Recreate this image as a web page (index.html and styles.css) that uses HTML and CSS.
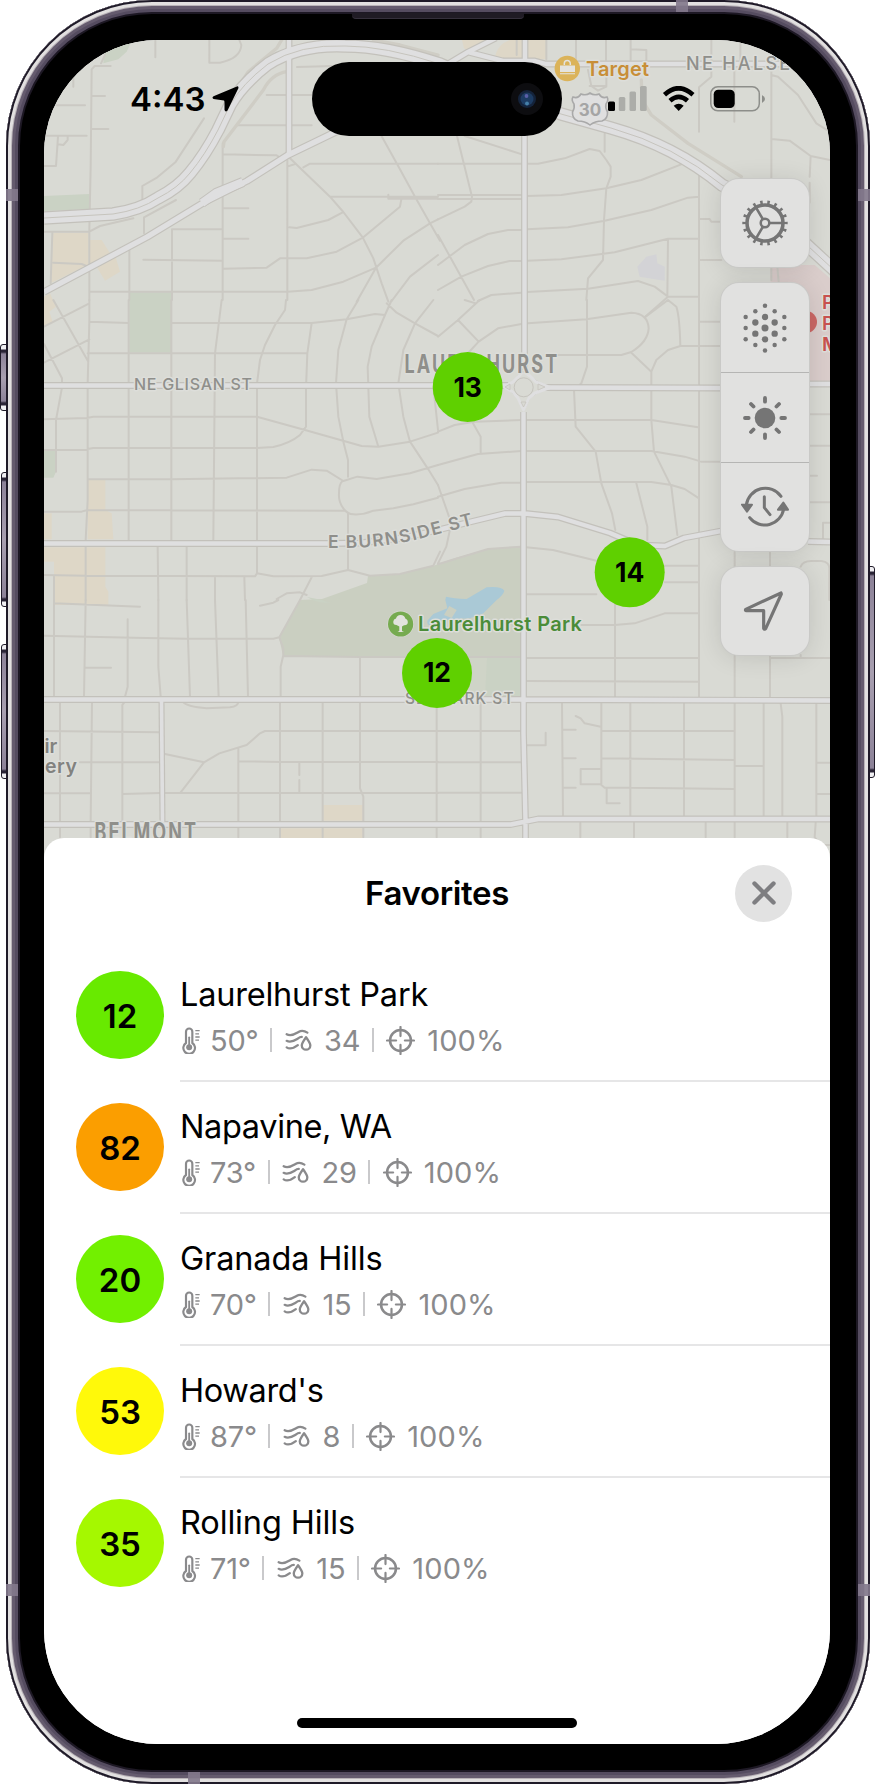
FILE: index.html
```html
<!DOCTYPE html>
<html lang="en">
<head>
<meta charset="utf-8">
<title>Favorites</title>
<link rel="stylesheet" href="styles.css">
</head>
<body>
<svg class="defs" width="0" height="0" aria-hidden="true">
  <defs>
    <symbol id="thermo" viewBox="0 0 54 84">
      <path d="M12 51V17a9.500 9.500 0 0 1 19 0V51a17.500 17.500 0 1 1-19 0Z" fill="none" stroke="currentColor" stroke-width="6.500"/>
      <circle cx="21.500" cy="64" r="9" fill="currentColor"/>
      <path d="M21.500 34V60" stroke="currentColor" stroke-width="5.500" stroke-linecap="round"/>
      <path d="M40 14H53M40 23.500H51M40 33H53M40 42.500H51" stroke="currentColor" stroke-width="4"/>
    </symbol>
    <symbol id="humid" viewBox="0 0 80 70">
      <g fill="none" stroke="currentColor" stroke-width="7" stroke-linecap="round" stroke-linejoin="round">
        <path d="M4 16C18 24 30 15 40 9S58 5 67 11"/>
        <path d="M4 36C18 43 30 34 38 29Q44 24 50 24"/>
        <path d="M4 56C14 63 26 58 38 49"/>
        <path d="M63 25Q50 43 50 50A13 13 0 0 0 76 50Q76 43 63 25Z"/>
      </g>
    </symbol>
    <symbol id="scope" viewBox="0 0 86 86">
      <circle cx="43" cy="43" r="31" fill="none" stroke="currentColor" stroke-width="7.500"/>
      <path d="M43 3V30M43 56V83M3 43H30M56 43H83" stroke="currentColor" stroke-width="6.500" stroke-linecap="round"/>
    </symbol>
  </defs>
</svg>

<div class="device">
  <i class="key key-action"></i><i class="key key-up"></i><i class="key key-down"></i><i class="key key-side"></i>
  <div class="shell">
    <i class="speaker"></i>
    <i class="band band-tl"></i><i class="band band-tr"></i><i class="band band-bl"></i><i class="band band-br"></i>
    <i class="band band-top"></i><i class="band band-bottom"></i>
    <main class="screen">
      <section class="map-area">
        <svg class="map" viewBox="44 40 786 830" width="786" height="830">
          <g class="areas">
            <g transform="scale(.33333)">
              <path class="green" d="M310 190L320 100H405L380 155L355 178ZM132 588L268 582V628L132 633ZM388 875H516V1058H388Z"/>
              <path class="sand" d="M160 698H266V793L152 850ZM268 720H305L330 760L345 765L360 815L315 842L290 800L268 795ZM132 890L150 880L168 920L148 935L158 965L132 980Z"/>
            </g>
            <g transform="translate(438 0) scale(.33333)">
              <path class="sand" d="M72 120H325V178H170Q175 135 215 120H170L105 160L78 145Z"/>
              <path class="violet" d="M598 800L625 770L655 763L658 790L680 800V842L605 830Z"/>
              <path class="rose" d="M998 795H1130L1176 835V1145H998Z"/>
            </g>
            <g transform="translate(0 300) scale(.33333)">
              <path class="sand" d="M263 540H316V630L335 640L340 718H263ZM132 640H155V718H132ZM132 742H316V860L325 875V915H162V785H132Z"/>
              <path class="green" d="M132 452H168V515L160 533H132Z"/>
            </g>
            <g transform="translate(0 600) scale(.33333)">
              <path class="sand" d="M970 615H1088V662H970ZM842 685H1088V715H842Z"/>
            </g>
            <path class="park" d="M279 637L300 600L322 599L367 583L368 576L400 574L433 566L455 558L488 549L521 547V657L283 656Z"/>
            <path class="park-soft" d="M437 657H521V698H437Z"/>
            <path class="green" d="M487 657H521V697H485Z"/>
            <path class="green" d="M307 597L322 600Q330 605 340 598Q325 608 307 597Z"/>
            <g transform="translate(370 530) scale(.33333)">
              <path class="lake" d="M228 200Q250 205 290 207L350 172Q395 168 403 182Q400 195 380 210L340 250L300 265L240 268L185 285Q170 288 172 272L190 252L232 235L226 210Z"/>
              <path class="isle" d="M222 255L238 228L260 240L245 264Z"/>
            </g>
          </g>

          <g class="streets">
            <g transform="scale(.33333)">
              <path d="M466 120V172M628 120V188H660Q722 175 724 135L718 120M332 198H284L275 208L272 500L268 690V900M275 288H315M170 316H255M275 387H325M220 230V260M140 407H260M174 410L168 498H132M174 433L190 435L203 420V410M303 190L315 165M612 355L526 487L472 532L427 558V600M891 201L1000 198M800 285H935M710 376H935M670 463L830 466L850 480M668 430V900M1140 400L1190 490L1245 590L1290 670L1320 722M910 502L930 491H1314M862 500L885 492M862 480V900M870 475L990 590L1030 636L1088 712L1120 775L1145 850L1165 905M990 590H1314M1165 584V596H1314M868 682L890 684L985 660L1028 637M670 806L800 803L840 775H920L1010 755L1090 712L1200 620L1204 598M670 625H745M670 716H745M516 688H668M516 688V900M430 779L668 782M388 745V900M268 875H862L935 870L1030 845L1128 803L1210 722L1290 670L1314 658M1128 803L1070 905M1175 903L1230 830L1314 765M132 695H268L300 678L400 655M528 600L432 652V700M157 700L152 850M160 788L245 792L265 800"/>
              <path class="ramp" d="M670 440L672 425L790 270Q815 222 860 215M705 275L745 215L830 145L845 120M1120 120L1200 135L1314 165"/>
            </g>
            <g transform="translate(438 0) scale(.33333)">
              <path d="M325 120V178M236 120V165M414 120V180M504 120V180M578 120V180M578 148L625 150V180M820 120V230L783 262V395M907 120V180M889 200V365M1000 190V540M450 210L460 258L480 272L505 260V210M455 258H505M1000 225L1020 230L1080 285L1135 370L1170 392M1000 417L1055 422L1118 468L1176 480M1118 468L1115 530M0 491H300L380 475L455 447L485 453L505 480L518 500V530L505 565L498 660L495 780L450 835L445 900M500 400V455M80 408L252 463M55 400L102 590L100 605L80 620L0 658M0 585H252M0 597H252M267 588L370 585L505 565L610 540L745 487M267 688L390 682L500 662L640 630L750 593L783 590M380 355L710 460L750 487L783 518V900M0 795L80 735L150 702L210 690H252M0 705L108 900M0 870L70 830L150 798L215 783H252M267 782L370 778L530 757L690 716H783M690 716L688 890H783M783 780H850M783 657H815L820 665H850M267 876L450 866L600 843L650 860L690 890L620 952M120 903L160 885L250 878M1115 548V608M1000 800V840M1018 800L1022 845"/>
              <path class="ramp" d="M610 240L612 300L640 345L750 430L910 530"/>
            </g>
            <g transform="translate(0 300) scale(.33333)">
              <path d="M132 80L268 10M132 188L268 118M160 0L265 185M132 132L186 235V250M186 262L168 360V515M268 0V65L263 250V600L257 720M268 65L386 69M386 0V720M514 0V720M665 0L645 160L640 720M858 0L855 30L825 75L795 135L780 180L771 250V820M516 69H935L1040 58L1125 42L1155 45L1175 0M263 160H920M935 69L922 160L918 265V380L900 405Q870 430 820 441L770 444H280L245 450H132M132 358L260 354L280 350H771L915 390L1085 438L1135 440L1230 425L1314 398M1075 0L1040 58L1015 150L1008 250L1015 350L1030 425L1044 480V530M1155 45L1115 140L1103 200L1108 350L1135 440M1300 0L1245 70L1210 150L1195 250L1210 350L1230 425L1283 505L1314 555M1160 10L1190 38L1245 70L1314 108M263 537L515 538L860 533L935 509L980 512L1030 543L1072 530L1130 537L1230 520L1314 495M1028 543Q1017 550 1017 580Q1015 605 1030 625Q1042 642 1060 643Q1090 645 1120 632L1180 625L1240 613L1314 593M132 635H245L262 630L1035 632M1044 640V810M132 825L257 827L765 829L771 820L820 829L965 828L1044 810L1110 827L1200 822L1300 797L1320 755M257 740V900M473 740L475 900M560 740V900M645 829V900M733 832L735 900M162 827V900M935 832L900 900M830 897L860 880L900 877L920 885"/>
            </g>
            <g transform="translate(438 300) scale(.33333)">
              <path d="M113 10L80 0M0 110L60 60L125 0M60 60L122 125M85 165L122 125L180 85L250 72M270 70L445 58L580 38Q630 40 632 85Q630 125 580 156L550 165H355M580 158L640 215V360L648 455L700 560L718 705M447 0V200L430 250L408 270L413 380L473 455L490 550L522 640L532 690M620 52L690 0L715 20Q725 50 727 138M640 215L655 180L690 150L727 138H783M783 65H850M783 138H850M783 0V900M0 395L50 375L110 365L250 360M265 360H640L780 382M105 370L128 410V458M0 495L120 462L250 453M265 453H640L740 470L790 485H850M0 590L80 567L190 548H250M265 546H640L700 555L740 567L783 595M595 550L628 680V720M0 555L40 670L25 740L0 790M0 793L150 747L250 740L345 750L445 775L475 782M680 797H780M680 847H780M265 883H475M890 755V800M996 755V800M1115 343H1176M1115 437H1176M1115 527H1137M1115 607H1176M1155 715V668H1176M1088 800Q1095 783 1120 783H1150Q1176 785 1174 810V900M0 210L-15 250L0 390"/>
            </g>
            <g transform="translate(0 600) scale(.33333)">
              <path d="M132 107L400 113L560 116H820L838 112L900 0M838 112L850 145V165L842 200V290M850 168L1080 171H1560M1080 172V290M162 0V290M257 0L252 290M162 10L420 20M383 58V260L375 290M475 0V200L482 290M560 0L570 290M645 0L656 290M737 0L744 290M780 17L820 8L835 0M257 203H333M180 305V712M276 305L272 665V712M375 305L367 315V665M548 305Q560 320 620 325L690 322Q715 318 715 305M132 393L480 397M240 487H480M132 580H272M367 582L480 579H1314M840 305V712M968 305V712M1080 305V565L1090 590V712M1310 320V712M542 577L612 487L658 460L740 435L780 400L795 393H1314M495 462L612 487M715 445V712M715 484L840 486H1314M898 490V525M898 540V575"/>
            </g>
            <g transform="translate(438 600) scale(.33333)">
              <path d="M430 75H530L590 70L680 40H783M531 0V295M783 0V295M267 174H783M267 243L783 245M890 165V300M996 165V300M996 174H1176M1088 165V174M128 310V712M0 393H250M0 487H250M0 578H250M372 310L375 648M375 389H413M375 475H413M375 563H413M323 398V436H267M413 348L428 355L440 370L488 380M490 310V555L500 563H580L888 567M428 507H490M428 507V553H490M506 565V610H545M577 310V648M738 310V648M890 310V712M977 310V648M1028 310L1033 350V648M1135 310V648M490 393H888M490 475L888 480M890 498H977M1135 488H1176M1135 582H1176M427 668V712M588 668V712M803 668V712M1048 668V712M1133 668L1130 712L1150 735H1176"/>
            </g>
          </g>

          <defs>
            <path id="main-roads" d="M289 40V155M525 40V60M524.500 130V372M523.500 412V733L525.500 821V850M448 64L468 52L496 38M468 52L503 61H535L546 64H830M44 385.500H508M539 387.500L722 388M808 384H830M44 543.500H330L360 543L402 538L438 530L472 521.500L505 513.500H525L558 517L610 533L638 545L665 546L684 538L721 531M808 541.500L830 542M44 699.500H524L830 700.500M44 824.500H511L538 819H830"/>
            <path id="thin-roads" d="M161.500 700L162.500 822"/>
            <path id="sandy" d="M44 292L147 237L203 203L247 181L288 155L350 125"/>
            <path id="wide" d="M202 203L216 193L243 182"/>
            <path id="freeway" d="M44 218L113 214Q140 210 158 198Q178 188 190 173Q205 155 218 130L230 105Q242 84 268 64Q300 44 345 46Q385 46 440 64L500 90L561 114L611 128Q675 146 722 185L767 208L808 246L835 271"/>
          </defs>
          <use href="#sandy" class="case" stroke-width="7.500"/>
          <use href="#wide" class="case" stroke-width="10"/>
          <use href="#main-roads" class="case" stroke-width="6.800"/>
          <use href="#thin-roads" class="case" stroke-width="6"/>
          <use href="#freeway" class="case" stroke-width="13.500"/>
          <use href="#sandy" class="road" stroke-width="5.300"/>
          <use href="#wide" class="road" stroke-width="8"/>
          <use href="#main-roads" class="road" stroke-width="4.400"/>
          <use href="#thin-roads" class="road" stroke-width="3.600"/>
          <use href="#freeway" class="road" stroke-width="11"/>
          <use href="#freeway" class="median" stroke-width="1"/>
          <path class="case" stroke-width="1" d="M503 387L510 384L518 376L521 371M503 387L510 391L518 398L523.500 411L530 398L540 391L551 387L540 383L531 377L526 371"/>
          <path class="road" stroke-width="3" d="M504 387L513 382L519 376L523 371L530 376L536 382L550 387.500L535 393L529 398L523.500 410L518 398L513 392Z"/>
          <circle class="isle-ring" cx="523.700" cy="387.300" r="9.500"/>
          <path class="wedge" d="M505 387L510 384V390ZM538 384V390L545 387ZM521 402H526L523.500 407ZM521 372H526L523.500 368Z"/>

          <g class="labels">
            <text x="134" y="390" font-size="16" textLength="118">NE GLISAN ST</text>
            <text x="405" y="703.800" font-size="15.500" textLength="108.500">SE STARK ST</text>
            <text x="686" y="70" font-size="18" textLength="119">NE HALSEY</text>
            <path id="burnside" d="M328 548H345Q380 548 415 540L490 520.500" fill="none"/>
            <text font-size="17.500" class="semi"><textPath href="#burnside" textLength="148">E BURNSIDE ST</textPath></text>
            <text class="district" transform="translate(404.500 372.700) scale(.72 1)" textLength="212">LAURELHURST</text>
            <text class="district" transform="translate(94.500 841) scale(.72 1)" textLength="141">BELMONT</text>
            <text x="44.500" y="753" class="place">ir</text>
            <text x="45" y="773.300" class="place" textLength="32">ery</text>
            <g class="hospital"><text x="822" y="309">P</text><text x="822" y="330">P</text><text x="822" y="351">M</text></g>
            <circle cx="806" cy="322" r="11" fill="#cb6765"/>
            <text x="586" y="76" class="shop" textLength="63">Target</text>
            <text x="418" y="631.400" class="park-name" textLength="164">Laurelhurst Park</text>
          </g>
          <circle cx="567.300" cy="68.500" r="12.700" fill="#dbb35a"/>
          <path d="M560 65.500H575V72H560ZM560 73.300H575V74.300H560Z" fill="#e4e3df"/>
          <path d="M564.300 65V63.500A3 3 0 0 1 570.300 63.500V65" fill="none" stroke="#e4e3df" stroke-width="1.500"/>
          <circle cx="400.600" cy="624" r="13.200" fill="#d9dad4"/>
          <circle cx="400.600" cy="624" r="12.600" fill="#76ab50"/>
          <path d="M399.300 631V626.500L396.500 625Q393 625 393.300 621.500Q393.500 619 396 618.500Q397 614.800 400.800 615Q404.500 615 405.300 618.500Q408 619.500 407.800 622.500Q407.500 625.500 404 625.200L402 626.500V631L404 632H397.500Z" fill="#e2e3de"/>
          <path d="M573 97Q578 99 581 94Q586 96 590 93Q594 96 599 94Q602 99 607 97Q609 100 606 104Q605 108 607.500 112Q608 119 602 121Q595 121 590 125Q585 121 578 121Q572 119 572.500 112Q575 108 574 104Q571 100 573 97Z" fill="#dfdfdf" stroke="#a9a9a9" stroke-width="1.600"/>
          <text x="590" y="116" class="shield">30</text>

          <g class="pins">
            <circle cx="467.700" cy="387" r="35"/><text x="467.700" y="396.500">13</text>
            <circle cx="629.700" cy="572.300" r="35"/><text x="629.700" y="581.500">14</text>
            <circle cx="437" cy="673" r="35"/><text x="437" y="682.300">12</text>
          </g>
        </svg>

        <header class="status">
          <div class="clock">4:43
            <svg width="27" height="26" viewBox="0 0 27 26"><path d="M25.500.300L1.500 10.200Q-.5 11.500 1.500 13L12 14.500Q12.500 15 12.500 16V24Q13.500 26.500 15.500 24.500L26.500 2Q26.500 0 25.500.300Z"/></svg>
          </div>
          <div class="island">
            <svg width="32" height="32" viewBox="0 0 32 32">
              <circle cx="16" cy="16" r="16" fill="#0d0d10"/><circle cx="16" cy="16" r="9" fill="#14233b"/>
              <circle cx="16" cy="16" r="6.500" fill="#1d3c63"/><circle cx="15.500" cy="13" r="1.900" fill="#5a5fa8"/><circle cx="16" cy="20.500" r="1.900" fill="#457fa8"/>
            </svg>
          </div>
          <div class="indicators">
            <svg width="40" height="26" viewBox="0 0 40 26"><rect x="0" y="15.500" width="7" height="9.500" rx="1.500"/><g fill="#acada9"><rect x="10.800" y="11" width="6.500" height="14" rx="1.500"/><rect x="21.500" y="5.500" width="6.500" height="19.500" rx="1.500"/><rect x="32" y="0" width="6.700" height="25" rx="1.500"/></g></svg>
            <svg width="34" height="26" viewBox="0 0 34 26"><path d="M2.500 8.700Q16.500-4.200 31 8.700M8 14.800Q16.700 7 25.500 14.800" fill="none" stroke="#000" stroke-width="4.600"/><path d="M11.700 19.800Q16.700 15.800 21.700 19.800L16.700 25Z"/></svg>
            <svg width="55" height="26" viewBox="0 0 55 26"><rect x=".8" y=".8" width="48.500" height="24" rx="7" fill="none" stroke="#8d8e8a" stroke-width="1.500"/><rect x="3.700" y="3.700" width="21" height="18.300" rx="4.500"/><path d="M52 9.200Q55 10.500 55 13T52 16.800Z" fill="#8d8e8a"/></svg>
          </div>
        </header>

        <nav class="controls">
          <div class="panel"><button class="ctl" aria-label="Settings">
            <svg width="52" height="52" viewBox="-26 -26 52 52" fill="none" stroke="currentColor">
              <circle r="18" stroke-width="3.600"/><circle r="20.800" pathLength="360" stroke-width="3.800" stroke-dasharray="7 13" stroke-dashoffset="3.500"/>
              <circle r="4.300" stroke-width="2.500"/><path d="M5 0H17M-2.500 4.300L-8.500 14.700M-2.500-4.300L-8.500-14.700" stroke-width="2.600"/>
            </svg></button></div>
          <div class="panel">
            <button class="ctl" aria-label="Particles"><svg width="52" height="52" viewBox="-78 -78 156 156" fill="currentColor">
              <circle r="10.500"/><circle cy="-33" r="9.500"/><circle cy="34" r="9.500"/><circle cx="-29" cy="-16.500" r="9.500"/><circle cx="29" cy="-16.500" r="9.500"/><circle cx="-29" cy="17" r="9.500"/><circle cx="29" cy="17" r="9.500"/>
              <circle cy="-67" r="6.700"/><circle cy="67.500" r="6.700"/><circle cx="-29" cy="-50" r="6.700"/><circle cx="29" cy="-50" r="6.700"/><circle cx="-58" cy="-33" r="6.700"/><circle cx="58" cy="-33" r="6.700"/><circle cx="-58" r="6.700"/><circle cx="58" r="6.700"/><circle cx="-58" cy="34" r="6.700"/><circle cx="58" cy="34" r="6.700"/><circle cx="-29" cy="51" r="6.700"/><circle cx="29" cy="51" r="6.700"/>
            </svg></button>
            <button class="ctl" aria-label="Brightness"><svg width="52" height="52" viewBox="-78 -78 156 156">
              <circle r="31" fill="currentColor"/><path d="M0-49V-60M0 49V60M-49 0H-60M49 0H60M34.500-34.500L42-42M-34.500-34.500L-42-42M34.500 34.500L42 42M-34.500 34.500L-42 42" stroke="currentColor" stroke-width="11.500" stroke-linecap="round"/>
            </svg></button>
            <button class="ctl" aria-label="History"><svg width="52" height="52" viewBox="-78 -78 156 156" fill="none" stroke="currentColor" stroke-width="9" stroke-linecap="round" stroke-linejoin="round">
              <path d="M48-32A57.500 57.500 0 0 0-56-6M-46 32A57.500 57.500 0 0 0 56 6M-2-31V2L15 23"/>
              <path d="M-69-7H-39L-54 14ZM39 8H69L55-13Z" fill="currentColor" stroke-width="6"/>
            </svg></button>
          </div>
          <div class="panel"><button class="ctl" aria-label="Locate"><svg width="52" height="52" viewBox="-78 -78 156 156" fill="none" stroke="currentColor" stroke-width="9.500" stroke-linejoin="round">
            <path d="M48-54L-58-5Q-60-1-56-1L-4-1V52Q-1 57 2 53L49-51Z"/></svg></button></div>
        </nav>
      </section>

      <section class="sheet">
        <div class="sheet-head">
          <h1>Favorites</h1>
          <button class="close" aria-label="Close"><svg width="24" height="24" viewBox="0 0 24 24"><path d="M2.500 2.500L21.500 21.500M21.500 2.500L2.500 21.500" stroke="#7e7e81" stroke-width="4.400" stroke-linecap="round"/></svg></button>
        </div>
        <ul class="list">
          <li class="item"><span class="aqi aqi-12">12</span><div class="info"><h2>Laurelhurst Park</h2><p class="stats"><svg class="i-thermo"><use href="#thermo"/></svg><span>50°</span><i></i><svg class="i-humid"><use href="#humid"/></svg><span>34</span><i></i><svg class="i-scope"><use href="#scope"/></svg><span class="pct">100%</span></p></div></li>
          <li class="item"><span class="aqi aqi-82">82</span><div class="info"><h2 class="snug">Napavine, WA</h2><p class="stats"><svg class="i-thermo"><use href="#thermo"/></svg><span>73°</span><i></i><svg class="i-humid"><use href="#humid"/></svg><span>29</span><i></i><svg class="i-scope"><use href="#scope"/></svg><span class="pct">100%</span></p></div></li>
          <li class="item"><span class="aqi aqi-20">20</span><div class="info"><h2 class="loose">Granada Hills</h2><p class="stats"><svg class="i-thermo"><use href="#thermo"/></svg><span>70°</span><i></i><svg class="i-humid"><use href="#humid"/></svg><span>15</span><i></i><svg class="i-scope"><use href="#scope"/></svg><span class="pct">100%</span></p></div></li>
          <li class="item"><span class="aqi aqi-53">53</span><div class="info"><h2 class="snug">Howard's</h2><p class="stats"><svg class="i-thermo"><use href="#thermo"/></svg><span>87°</span><i></i><svg class="i-humid"><use href="#humid"/></svg><span>8</span><i></i><svg class="i-scope"><use href="#scope"/></svg><span class="pct">100%</span></p></div></li>
          <li class="item"><span class="aqi aqi-35">35</span><div class="info"><h2 class="loose">Rolling Hills</h2><p class="stats"><svg class="i-thermo"><use href="#thermo"/></svg><span>71°</span><i></i><svg class="i-humid"><use href="#humid"/></svg><span>15</span><i></i><svg class="i-scope"><use href="#scope"/></svg><span class="pct">100%</span></p></div></li>
        </ul>
        <div class="home-bar"></div>
      </section>
    </main>
  </div>
</div>
</body>
</html>
```
FILE: styles.css
```css
* { box-sizing: border-box; }
body { margin: 0; background: #fff; font-family: Inter, "Liberation Sans", sans-serif; color: #000; }
h1, h2, p, ul { margin: 0; padding: 0; }
button { border: 0; padding: 0; background: none; color: inherit; }
.defs { position: absolute; }

/* Phone body */
.device { position: relative; width: 876px; height: 1784px; padding: 0 6px; overflow: hidden; }
.shell {
  position: relative; height: 1784px; padding: 40px 40px 40px 38px; border-radius: 146px; background: #000;
  box-shadow: inset 0 0 0 2px #1f1a28, inset 0 0 0 5px #e2e0e0, inset 0 0 0 6px #b9b3b8,
    inset 0 0 0 9px #655b6e, inset 0 0 0 12px #554c60, inset 0 0 0 14px #1d1824;
}
.key { position: absolute; border: 1.500px solid #1f1a28; background: linear-gradient(#f0eff2 0 4px, #2a2436 5px 7px, #8c8298 9px, #a89fb0 50%, #8c8298 calc(100% - 9px), #2a2436 calc(100% - 7px) calc(100% - 5px), #f0eff2 calc(100% - 4px)); }
.key-action { left: 0; top: 344px; width: 7px; height: 67px; border-radius: 3px 0 0 3px; }
.key-up { left: 1px; top: 472px; width: 6px; height: 135px; border-radius: 3px 0 0 3px; }
.key-down { left: 1px; top: 644px; width: 6px; height: 135px; border-radius: 3px 0 0 3px; }
.key-side { right: 1px; top: 566px; width: 6px; height: 212px; border-radius: 0 3px 3px 0; }
.band { position: absolute; background: #83798c; opacity: .9; width: 12px; height: 12px; }
.band-tl { left: 0; top: 189px; }
.band-tr { right: 0; top: 189px; }
.band-bl { left: 0; bottom: 188px; }
.band-br { right: 0; bottom: 188px; }
.band-top { left: 670px; top: 0; }
.band-bottom { left: 182px; bottom: 0; }
.speaker { position: absolute; left: 346px; top: 13px; width: 172px; height: 6px; background: #1f1b24; border-bottom: 1px solid #35303c; border-radius: 0 0 4px 4px; }
.screen { display: flex; flex-direction: column; height: 1704px; border-radius: 114px; overflow: hidden; background: #fff; }

/* Map */
.map-area { position: relative; height: 830px; flex: none; background: #d9dad4; }
.map { position: absolute; inset: 0; }
.map text { font-weight: 500; fill: #8f8f8b; }
.areas .green { fill: #cad2c4; }
.areas .sand { fill: #ded7c7; }
.areas .violet { fill: #d3d3d6; }
.areas .rose { fill: #dacdcb; }
.areas .park { fill: #cacfc1; }
.areas .park-soft { fill: #cfd4c7; }
.areas .lake { fill: #aac9d6; }
.areas .isle { fill: #cacfc1; }
.streets path { fill: none; stroke: #cbc9c3; stroke-width: 6; stroke-linecap: round; stroke-linejoin: round; }
.streets .ramp { stroke: #cfcdc5; stroke-width: 10; }
.case { fill: none; stroke: #c3c1bb; stroke-linejoin: round; }
.road { fill: none; stroke: #dfdfe0; stroke-linejoin: round; }
.median { fill: none; stroke: #c6c4bd; }
.isle-ring { fill: #d9dad4; stroke: #c6c4be; stroke-width: 1; }
.wedge { fill: #d9dad4; stroke: #c6c4be; stroke-width: .8; }
.map .labels text { stroke: #dddeda; stroke-width: 3px; paint-order: stroke; stroke-linejoin: round; }
.map .labels .semi { font-weight: 600; }
.map .labels .district { font-size: 25px; font-weight: 700; }
.map .labels .place { font-size: 19.500px; font-weight: 600; fill: #82827f; }
.map .labels .hospital text { font-size: 19px; font-weight: 600; fill: #c95250; }
.map .labels .shop { font-size: 20px; font-weight: 600; fill: #c88e37; }
.map .labels .park-name { font-size: 20px; font-weight: 600; fill: #4b8c39; }
.map .shield { font-size: 17px; font-weight: 700; fill: #a5a5a5; text-anchor: middle; }
.pins circle { fill: #5fd000; }
.map .pins text { fill: #000; font-size: 26.500px; font-weight: 700; text-anchor: middle; }

/* Status bar */
.status { position: relative; display: grid; grid-template-columns: 268px 250px 1fr; height: 96px; padding-top: 22px; }
.clock { display: flex; align-items: center; gap: 7px; padding-left: 86px; font-size: 33px; font-weight: 600; letter-spacing: 0; }
.island { display: flex; align-items: center; justify-content: flex-end; height: 74px; padding-right: 19px; border-radius: 37px; background: #000; }
.indicators { display: flex; align-items: center; padding-left: 46px; gap: 14px; }

/* Floating controls */
.controls { position: absolute; top: 139px; right: 21px; display: flex; flex-direction: column; gap: 16px; color: #757575; }
.panel { width: 88px; border-radius: 18px; background: #e1e1e0; box-shadow: 0 0 0 1px #c9c9c7, 0 2px 24px rgba(0, 0, 0, .12); }
.ctl { display: flex; align-items: center; justify-content: center; width: 88px; height: 88px; }
.ctl:not(:last-child) { height: 89px; }
.ctl + .ctl { height: 90px; border-top: 1px solid #b5b5b4; }
.ctl + .ctl:last-child { height: 89px; }

/* Favorites sheet */
.sheet { position: relative; display: flex; flex-direction: column; flex: 1; margin-top: -32px; border-radius: 20px 20px 0 0; background: #fff; }
.sheet-head { display: grid; grid-template-columns: 1fr auto 1fr; align-items: center; height: 112px; padding: 0 38px 1.500px; }
.sheet-head h1 { grid-column: 2; font-size: 33px; font-weight: 600; letter-spacing: -.350px; }
.close { display: flex; align-items: center; justify-content: center; justify-self: end; width: 57px; height: 57px; border-radius: 50%; background: #e2e2e2; }
.list { list-style: none; }
.item { display: flex; gap: 16px; height: 132px; padding-left: 32px; }
.aqi { display: flex; align-items: center; justify-content: center; flex: none; width: 88px; height: 88px; margin-top: 21px; padding-top: 2px; border-radius: 50%; font-size: 33px; font-weight: 600; letter-spacing: 0; }
.aqi-12 { background: #68ea00; }
.aqi-82 { background: #fb9e00; }
.aqi-20 { background: #72f000; }
.aqi-53 { background: #fff90a; }
.aqi-35 { background: #a5f800; }
.info { flex: 1; padding-top: 24px; border-bottom: 2px solid #e6e6e7; }
.item:last-child .info { border-bottom: 0; }
.info h2 { height: 41px; font-size: 32.500px; font-weight: 400; line-height: 41px; letter-spacing: -.220px; }
.info .snug { letter-spacing: -.370px; }
.info .loose { letter-spacing: -.140px; }
.stats { display: flex; align-items: center; height: 50px; font-size: 29px; color: #8a8a8c; letter-spacing: -.2px; }
.stats i { width: 2px; height: 24px; margin: 0 12.500px 0 11.500px; background: #c9c9cb; }
.i-thermo { width: 18px; height: 28px; margin: 0 10px 0 2px; }
.i-humid { width: 27px; height: 23px; margin-right: 12.500px; }
.i-scope { width: 29px; height: 29px; margin-right: 12px; }
.stats .pct { letter-spacing: .1px; }
.home-bar { width: 280px; height: 10px; margin: auto auto 16px; border-radius: 5px; background: #000; }
```
